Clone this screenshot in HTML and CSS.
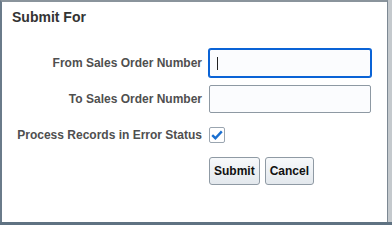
FILE: index.html
```html
<!DOCTYPE html>
<html lang="en">
<head>
    <meta charset="UTF-8">
    <title>Submit For</title>
    <link rel="stylesheet" href="styles.css">
</head>
<body>
    <div class="frame">
        <div class="dialog">
            <div class="title">Submit For</div>
            <div class="form">
                <label class="label" for="from-so">From Sales Order Number</label>
                <div class="field"><input id="from-so" class="text focused" type="text"><span class="caret"></span></div>

                <label class="label" for="to-so">To Sales Order Number</label>
                <div class="field"><input id="to-so" class="text" type="text"></div>

                <label class="label" for="err">Process Records in Error Status</label>
                <div class="field">
                    <span class="check" id="err">
                        <svg width="12" height="10" viewBox="0 0 12 10">
                            <path d="M1.2 5.2 L4.4 8.2 L10.8 1.4" fill="none" stroke="#1b6fd0" stroke-width="2.4"/>
                        </svg>
                    </span>
                </div>

                <div></div>
                <div class="buttons">
                    <button class="btn">Submit</button>
                    <button class="btn">Cancel</button>
                </div>
            </div>
        </div>
    </div>
</body>
</html>
```

FILE: styles.css
```css
body {
    margin: 0;
    font-family: "Liberation Sans", Arial, sans-serif;
    background-color: #fff;
}

.frame {
    width: 392px;
    height: 225px;
    box-sizing: border-box;
    padding-right: 4px;
    background-color: #c4c9cd;
    border-bottom: 3px solid #5f7282;
}

.dialog {
    height: 100%;
    box-sizing: border-box;
    background-color: #fff;
    border-top: 2px solid #8a949c;
    border-left: 2px solid #6a7b8a;
    border-right: 1px solid #7c8893;
    padding: 7px 0 0 10px;
}

.title {
    font-size: 14px;
    line-height: 16px;
    font-weight: bold;
    color: #333;
}

.form {
    display: grid;
    grid-template-columns: 186px 1fr;
    grid-auto-rows: 28px;
    column-gap: 7px;
    row-gap: 8px;
    margin-top: 24px;
    margin-left: 4px;
}

.label {
    display: flex;
    align-items: center;
    justify-content: flex-end;
    font-size: 12px;
    font-weight: bold;
    color: #4f4f4f;
    white-space: nowrap;
}

.field {
    position: relative;
    display: flex;
    align-items: center;
}

.text {
    width: 162px;
    height: 28px;
    box-sizing: border-box;
    border: 1px solid #8e99a3;
    border-radius: 2px;
    background-color: #fbfcfe;
    outline: none;
    padding: 0 6px;
}

.text.focused {
    border-color: #0a63d6;
    box-shadow: 0 0 0 1px #0a63d6;
}

.caret {
    position: absolute;
    left: 8px;
    top: 8px;
    width: 1px;
    height: 13px;
    background-color: #222;
}

.check {
    width: 16px;
    height: 16px;
    box-sizing: border-box;
    border: 1px solid #9aa5b0;
    border-radius: 2px;
    background-color: #fff;
    display: flex;
    align-items: center;
    justify-content: center;
}

.buttons {
    display: flex;
    gap: 5px;
}

.btn {
    height: 28px;
    padding: 0 4px;
    font-family: "Liberation Sans", Arial, sans-serif;
    font-size: 12px;
    font-weight: bold;
    color: #111;
    border: 1px solid #8f9aa4;
    border-radius: 3px;
    background: linear-gradient(#f7f9fb, #e3e8ed);
}
```
